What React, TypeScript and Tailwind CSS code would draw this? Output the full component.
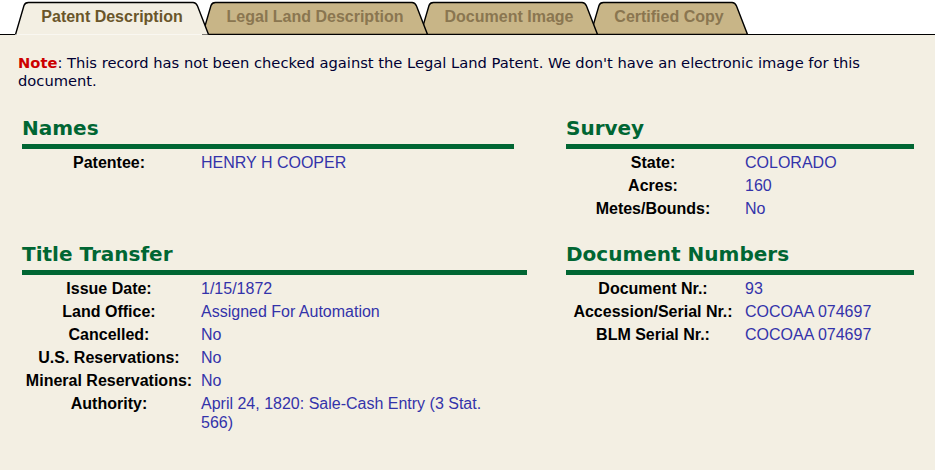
import React from 'react'

type Tab = { label: string; width: number; active?: boolean; z: string; ml: string }

const tabs: Tab[] = [
  { label: 'Patent Description', width: 194, active: true, z: 'z-40', ml: 'ml-0' },
  { label: 'Legal Land Description', width: 226, z: 'z-30', ml: '-ml-[7px]' },
  { label: 'Document Image', width: 178, z: 'z-20', ml: '-ml-[8px]' },
  { label: 'Certified Copy', width: 158, z: 'z-10', ml: '-ml-[8px]' },
]

const TabShape = ({ width, active }: { width: number; active?: boolean }) => {
  const w = width
  const outline = `M0.5,34.5 L9,5.5 Q10,2.5 13.5,2.5 L${w - 16},2.5 Q${w - 13},2.5 ${w - 11.5},6 L${w - 0.5},34.5`
  return (
    <svg className="absolute inset-0" width={w} height={35} viewBox={`0 0 ${w} 35`}>
      <path d={outline + ' Z'} fill={active ? '#f3efe3' : '#c8b587'} stroke="none" />
      <path d={active ? outline : outline + ' Z'} fill="none" stroke="#000" strokeWidth={1.4} />
    </svg>
  )
}

type Row = { label: string; value: string }

const Section = ({ title, rows, width }: { title: string; rows: Row[]; width: string }) => (
  <div className={width}>
    <h2 className="text-[20px] leading-[24px] font-bold text-[#006633] font-['DejaVu_Sans',Verdana,sans-serif]">
      {title}
    </h2>
    <div className="mt-[4px] h-[5px] bg-[#006633]" />
    <div className="mt-[2px] font-['Liberation_Sans',Arial,sans-serif] text-[16px] leading-[19px]">
      {rows.map((row) => (
        <div key={row.label} className="flex items-start">
          <div className="w-[174px] shrink-0 py-[2px] text-center font-bold text-black">{row.label}</div>
          <div className="flex-1 py-[2px] pl-[5px] pr-[16px] text-[#3333aa]">{row.value}</div>
        </div>
      ))}
    </div>
  </div>
)

export default function App() {
  return (
    <div className="min-h-screen flex flex-col bg-[#f3efe3]">
      {/* tab bar */}
      <div className="flex h-[35px] bg-white">
        <div className="w-[15px] border-b border-black" />
        {tabs.map((tab) => (
          <div
            key={tab.label}
            className={`relative ${tab.z} ${tab.ml} h-[35px] shrink-0 flex items-center justify-center pb-[1px]`}
            style={{ width: tab.width }}
          >
            <TabShape width={tab.width} active={tab.active} />
            <span
              className={`relative text-[16px] font-bold font-['Liberation_Sans',Arial,sans-serif] ${
                tab.active ? 'text-[#6a562a]' : 'text-[#8a7650]'
              }`}
            >
              {tab.label}
            </span>
          </div>
        ))}
        <div className="flex-1 border-b border-black" />
      </div>

      <div className="flex-1 px-[18px] pt-[19px]">
        <p className="text-[14.7px] leading-[18px] text-[#000033] font-['DejaVu_Sans',Verdana,sans-serif]">
          <span className="font-bold text-[#cc0000]">Note</span>: This record has not been checked against the Legal
          Land Patent. We don't have an electronic image for this document.
        </p>

        <div className="mt-[26px] ml-[4px] grid grid-cols-[544px_348px] gap-y-[22px]">
          <Section title="Names" width="w-[492px]" rows={[{ label: 'Patentee:', value: 'HENRY H COOPER' }]} />
          <Section
            title="Survey"
            width="w-[348px]"
            rows={[
              { label: 'State:', value: 'COLORADO' },
              { label: 'Acres:', value: '160' },
              { label: 'Metes/Bounds:', value: 'No' },
            ]}
          />
          <Section
            title="Title Transfer"
            width="w-[505px]"
            rows={[
              { label: 'Issue Date:', value: '1/15/1872' },
              { label: 'Land Office:', value: 'Assigned For Automation' },
              { label: 'Cancelled:', value: 'No' },
              { label: 'U.S. Reservations:', value: 'No' },
              { label: 'Mineral Reservations:', value: 'No' },
              { label: 'Authority:', value: 'April 24, 1820: Sale-Cash Entry (3 Stat. 566)' },
            ]}
          />
          <Section
            title="Document Numbers"
            width="w-[348px]"
            rows={[
              { label: 'Document Nr.:', value: '93' },
              { label: 'Accession/Serial Nr.:', value: 'COCOAA 074697' },
              { label: 'BLM Serial Nr.:', value: 'COCOAA 074697' },
            ]}
          />
        </div>
      </div>
    </div>
  )
}
